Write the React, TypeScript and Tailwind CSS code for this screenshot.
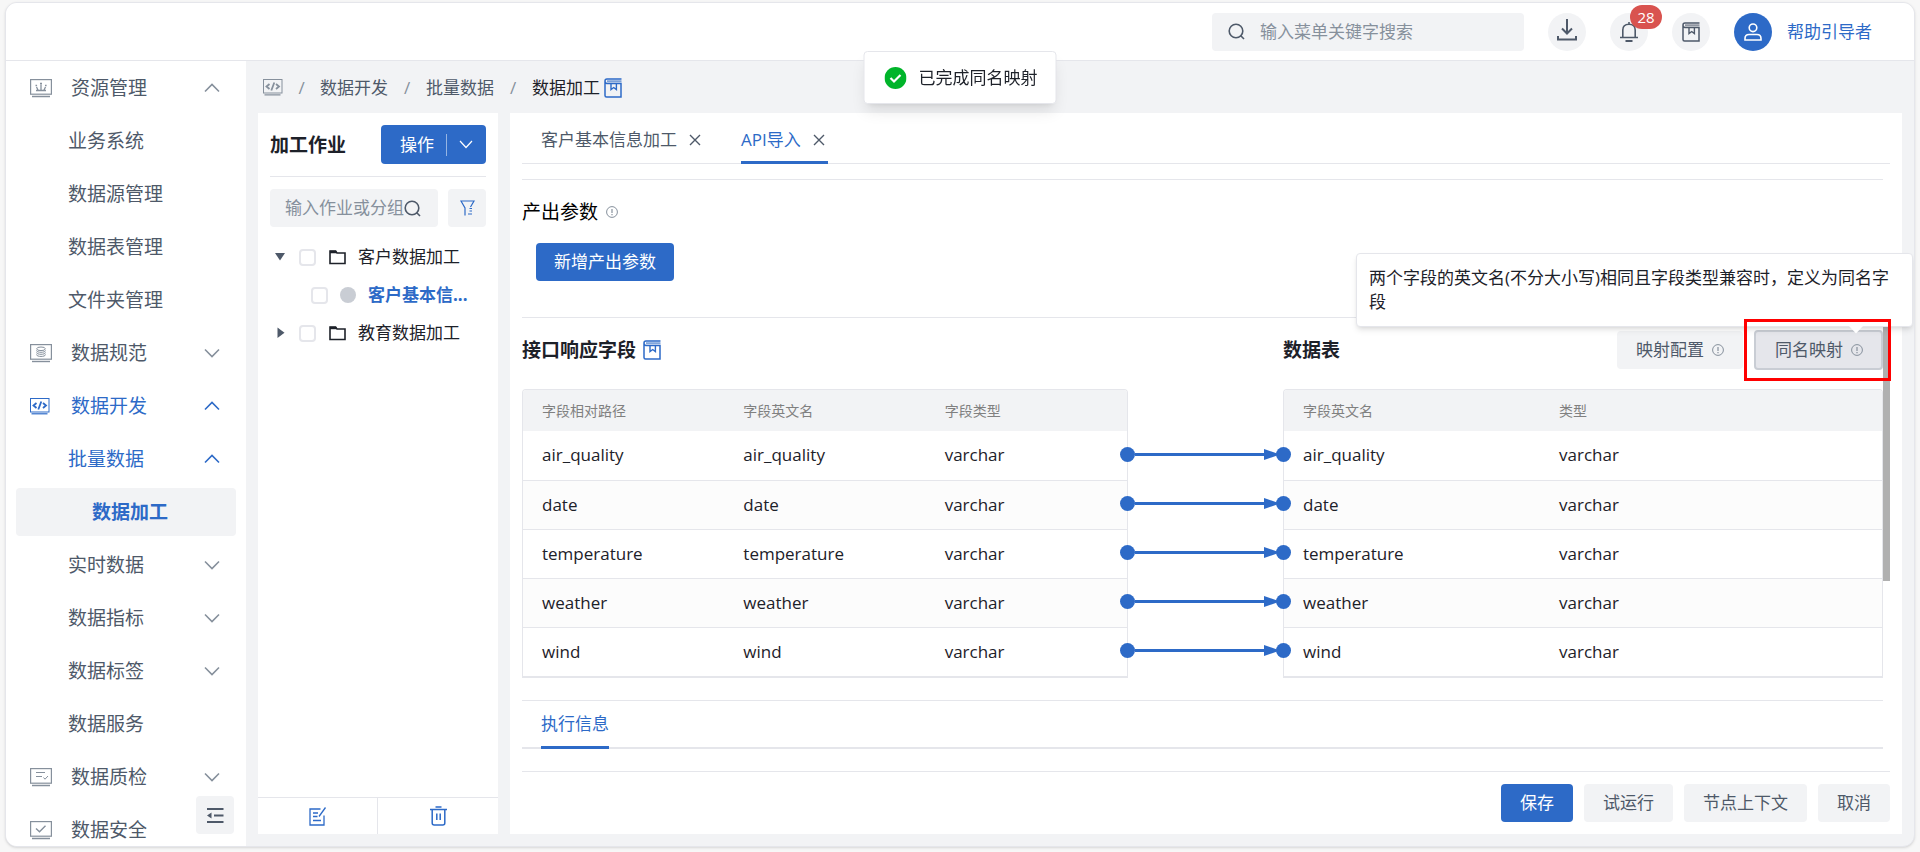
import React from "react";

const MENU = [
  { label: "资源管理", icon: "resource", arrow: "up" },
  { label: "业务系统" },
  { label: "数据源管理" },
  { label: "数据表管理" },
  { label: "文件夹管理" },
  { label: "数据规范", icon: "standard", arrow: "down" },
  { label: "数据开发", icon: "code", arrow: "up", active: true },
  { label: "批量数据", arrow: "up", active: true },
  { label: "数据加工", current: true },
  { label: "实时数据", arrow: "down" },
  { label: "数据指标", arrow: "down" },
  { label: "数据标签", arrow: "down" },
  { label: "数据服务" },
  { label: "数据质检", icon: "quality", arrow: "down" },
  { label: "数据安全", icon: "security" },
];

const FIELDS = ["air_quality", "date", "temperature", "weather", "wind"];

function MonitorIcon({ kind }: { kind?: string }) {
  if (kind === "code") {
    return (
      <svg width="20" height="17" viewBox="0 0 20 17" fill="none" stroke="currentColor">
        <rect x="0.5" y="0.5" width="18.5" height="13.5" />
        <path d="M1.5 15.8h16" strokeWidth="1.2" />
        <path d="M6.500 5L3.500 7.500l3 2.500M13 5l3 2.500-3 2.500M11.300 3.500l-3 8" strokeWidth="1.800" />
      </svg>
    );
  }
  return (
    <svg width="22" height="19" viewBox="0 0 22 19" fill="none" stroke="currentColor">
      <rect x="0.6" y="0.6" width="20.8" height="14.6" strokeWidth="1.2" />
      <path d="M2 17.5h18" strokeWidth="1.4" />
      {kind === "resource" && (
        <path d="M6 11.500h10M8 11L6.500 8M11 11V5.500M14 11l1.500-3M5.500 6.500h1.600M10 4.500h2M15 6.500h1.600" strokeWidth="1.300" />
      )}
      {kind === "standard" && (
        <>
          <ellipse cx="11" cy="4.8" rx="4.3" ry="1.8" />
          <path d="M6.5 6.5c0 2.4 9 2.4 9 0M6.5 8.5c0 2.4 9 2.4 9 0M6.5 10.5c0 2.6 9 2.6 9 0" />
        </>
      )}
      {kind === "quality" && <path d="M6 4.5h9M6 8.5h6M13.5 9.5l1.5 1.7 3-3.2" />}
      {kind === "security" && <path d="M6 7.5l3.5 3.2 6-6" strokeWidth="1.4" />}
    </svg>
  );
}

function Chevron({ up, className }: { up?: boolean; className?: string }) {
  return (
    <svg width="16" height="10" viewBox="0 0 16 10" fill="none" stroke="currentColor" strokeWidth="1.6" className={className}>
      <path d={up ? "M1 8.5l7-7 7 7" : "M1 1.5l7 7 7-7"} />
    </svg>
  );
}

function BookIcon() {
  return (
    <svg width="18" height="20" viewBox="0 0 18 20" fill="none" stroke="currentColor" strokeWidth="1.5">
      <path d="M17.500 1H3Q1 1 1 3v14.500Q1 19 2.500 19H17V5.500H3Q1 5.500 1 3" />
      <path d="M3 3.200h14.500" strokeWidth="2" strokeOpacity="0.6" />
      <path d="M7 6v5.500l2.700-2 2.700 2V6" strokeWidth="1.400" />
    </svg>
  );
}

function InfoIcon() {
  return (
    <svg width="12" height="12" viewBox="0 0 12 12" fill="none" stroke="#86909c" className="shrink-0">
      <circle cx="6" cy="6" r="5.400" />
      <path d="M6 3v4M6 8v1.300" strokeWidth="1.200" />
    </svg>
  );
}

function SearchIcon() {
  return (
    <svg width="17" height="17" viewBox="0 0 17 17" fill="none" stroke="#4e5969" strokeWidth="1.600" className="shrink-0">
      <circle cx="8" cy="8" r="6.800" />
      <path d="M12.500 12.500l3.500 3.500" />
    </svg>
  );
}

function CloseIcon() {
  return (
    <svg width="12" height="12" viewBox="0 0 12 12" fill="none" stroke="#4e5969" strokeWidth="1.400">
      <path d="M1 1l10 10M11 1L1 11" />
    </svg>
  );
}

function FolderIcon() {
  return (
    <svg width="17" height="15" viewBox="0 0 17 15" fill="none" stroke="#1d2129" strokeWidth="1.600">
      <path d="M1 13.500V1h5.500l1.500 2h8v10.500z" />
      <path d="M1 2h6.500" strokeWidth="2.400" />
    </svg>
  );
}

function Header() {
  return (
    <header className="flex h-[58px] items-center justify-end border-b border-[#e5e6eb] bg-white pr-[42px]">
      <label className="flex h-[38px] w-[312px] items-center gap-[15px] rounded bg-[#f2f3f5] px-4">
        <SearchIcon />
        <input
          aria-label="搜索菜单"
          placeholder="输入菜单关键字搜索"
          className="min-w-0 flex-1 bg-transparent outline-none placeholder:text-[#86909c]"
        />
      </label>
      <div className="ml-6 flex items-center gap-6">
        <button aria-label="下载" className="flex size-[38px] items-center justify-center rounded-full bg-[#f2f3f5]">
          <svg width="20" height="22" viewBox="0 0 20 22" fill="none" stroke="#4e5969" strokeWidth="2" className="mb-1">
            <path d="M10 0v14M5 9.500l5 5 5-5M1 17v3.500h18V17" />
          </svg>
        </button>
        <button aria-label="通知" className="relative flex size-[38px] items-center justify-center rounded-full bg-[#f2f3f5]">
          <svg width="18" height="20" viewBox="0 0 18 20" fill="none" stroke="#4e5969" strokeWidth="1.600">
            <path d="M0 15.500h18M2.800 15.500V8q0-5.800 6.200-5.800T15.200 8v7.500M9 0v2" />
            <path d="M5.500 19h7" strokeWidth="1.800" />
          </svg>
          <span className="absolute -top-2 left-5 flex h-6 w-8 items-center justify-center rounded-full bg-[#d9534f] text-[15px] text-white">
            28
          </span>
        </button>
        <button aria-label="文档" className="flex size-[38px] items-center justify-center rounded-full bg-[#f2f3f5] text-[#4e5969]">
          <BookIcon />
        </button>
      </div>
      <button className="ml-6 flex items-center gap-[15px] text-[#2d6ac7]">
        <span className="flex size-[38px] items-center justify-center rounded-full bg-[#2d6ac7]">
          <svg width="18" height="18" viewBox="0 0 18 18" fill="none" stroke="white" strokeWidth="1.600">
            <circle cx="9" cy="4.800" r="3.800" />
            <path d="M1 17v-1.500q0-4 4-4h8q4 0 4 4V17z" />
          </svg>
        </span>
        帮助引导者
      </button>
    </header>
  );
}

function Sidebar() {
  return (
    <nav className="relative flex w-60 shrink-0 flex-col gap-[5px] overflow-hidden bg-white px-[10px] pt-[3px] text-[19px]">
      {MENU.map((item) => {
        const color = item.current || item.active ? "text-[#2d6ac7]" : "text-[#4e5969]";
        return (
          <a
            key={item.label}
            href="#"
            className={`flex h-12 shrink-0 items-center rounded pr-4 ${color} ${
              item.current ? "bg-[#f2f3f5] pl-[76px] font-bold" : item.icon ? "pl-[14px]" : "pl-[52px]"
            }`}
          >
            {item.icon && (
              <span className={`w-[41px] ${item.active ? "" : "text-[#86909c]"}`}>
                <MonitorIcon kind={item.icon} />
              </span>
            )}
            {item.label}
            {item.arrow && (
              <Chevron up={item.arrow === "up"} className={`ml-auto ${item.active ? "" : "text-[#86909c]"}`} />
            )}
          </a>
        );
      })}
      <button
        aria-label="收起菜单"
        className="absolute right-3 bottom-3 flex size-[38px] items-center justify-center rounded bg-[#f2f3f5]"
      >
        <svg width="18" height="15" viewBox="0 0 18 15" fill="none" stroke="#4e5969" strokeWidth="1.800">
          <path d="M1 1h16.500M8 7.500h9.500M1 14h16.500" />
          <path d="M5.500 4.500v6L1 7.500z" fill="#4e5969" stroke="none" />
        </svg>
      </button>
    </nav>
  );
}

function Breadcrumb() {
  return (
    <div className="flex h-[52px] shrink-0 items-center pt-px pl-[17px] text-[#4e5969]">
      <span className="text-[#86909c]">
        <MonitorIcon kind="code" />
      </span>
      <span className="w-[37px] text-center text-[#86909c]">/</span>
      <a href="#">数据开发</a>
      <span className="w-[38px] text-center text-[#86909c]">/</span>
      <a href="#">批量数据</a>
      <span className="w-[38px] text-center text-[#86909c]">/</span>
      <span className="mr-1 text-[#1d2129]">数据加工</span>
      <span className="text-[#2d6ac7]">
        <BookIcon />
      </span>
    </div>
  );
}

function Check({ label }: { label: string }) {
  return (
    <input
      type="checkbox"
      aria-label={label}
      className="size-[17px] shrink-0 appearance-none rounded border-2 border-[#e5e6eb] bg-white"
    />
  );
}

function JobPanel() {
  return (
    <section className="flex w-60 shrink-0 flex-col bg-white">
      <div className="mx-3 flex h-16 items-center justify-between border-b border-[#e5e6eb]">
        <h2 className="text-[19px] font-bold text-[#1d2129]">加工作业</h2>
        <button className="flex h-[39px] w-[105px] items-center rounded bg-[#2d6ac7] pl-[19px] text-white">
          操作
          <span className="mr-3 ml-3 h-[22px] w-px bg-white/50"></span>
          <svg width="14" height="9" viewBox="0 0 14 9" fill="none" stroke="currentColor" strokeWidth="1.200">
            <path d="M1 1l6 6.500L13 1" />
          </svg>
        </button>
      </div>
      <div className="mx-3 mt-3 flex gap-[10px]">
        <label className="flex h-[38px] min-w-0 flex-1 items-center rounded bg-[#f2f3f5] pr-[17px] pl-[15px]">
          <input
            aria-label="搜索作业"
            placeholder="输入作业或分组"
            className="min-w-0 flex-1 bg-transparent outline-none placeholder:text-[#86909c]"
          />
          <SearchIcon />
        </label>
        <button aria-label="筛选" className="flex size-[38px] items-center justify-center rounded bg-[#f2f3f5]">
          <svg width="15" height="16" viewBox="0 0 15 16" fill="none" stroke="#2d6ac7" strokeWidth="1.200">
            <path d="M5 15.500V8L1 1h13l-3.500 6M9.500 8.500H12M9.500 11H12M8 14h4" />
          </svg>
        </button>
      </div>
      <ul className="mt-[11px] px-4 text-[#1d2129]">
        <li className="flex h-[38px] items-center">
          <svg width="12" height="8" viewBox="0 0 12 8" fill="#4e5969">
            <path d="M1 0h10L6 7.500z" />
          </svg>
          <span className="mr-[13px] ml-[13px] flex">
            <Check label="客户数据加工" />
          </span>
          <FolderIcon />
          <a href="#" className="ml-3">客户数据加工</a>
        </li>
        <li className="flex h-[38px] items-center pl-[37px]">
          <Check label="客户基本信息加工" />
          <span className="ml-3 size-4 shrink-0 rounded-full bg-[#c9cdd4]"></span>
          <a href="#" className="ml-3 font-bold whitespace-nowrap text-[#2d6ac7]">客户基本信...</a>
        </li>
        <li className="flex h-[38px] items-center">
          <svg width="12" height="12" viewBox="0 0 12 12" fill="#4e5969">
            <path d="M3.500 0.500v10.500l7-5.200z" />
          </svg>
          <span className="mr-[13px] ml-[13px] flex">
            <Check label="教育数据加工" />
          </span>
          <FolderIcon />
          <a href="#" className="ml-3">教育数据加工</a>
        </li>
      </ul>
      <div className="mt-auto grid h-[37px] grid-cols-2 border-t border-[#e5e6eb]">
        <button aria-label="编辑" className="flex items-center justify-center border-r border-[#e5e6eb]">
          <svg width="18" height="19" viewBox="0 0 18 19" fill="none" stroke="#2d6ac7" strokeWidth="1.300">
            <path d="M11.500 2H1v16h14V8.500M16.500 0.500L10 9.500M4 6h5M4 9.500h4.500M4 13.500h8" />
          </svg>
        </button>
        <button aria-label="删除" className="flex items-center justify-center">
          <svg width="17" height="20" viewBox="0 0 17 20" fill="none" stroke="#2d6ac7" strokeWidth="1.500">
            <path d="M0 3.500h17M5.500 1h6M2.200 3.500V17q0 2 2 2h8.600q2 0 2-2V3.500M6.800 7.500v6.500M10.200 7.500v6.500" />
          </svg>
        </button>
      </div>
    </section>
  );
}

function FieldTable({ columns, rows, widths }: { columns: string[]; rows: string[][]; widths: string[] }) {
  return (
    <div className="overflow-hidden rounded-t border border-b-2 border-[#e5e6eb]">
      <table className="w-full table-fixed text-left text-[#1d2129]">
        <thead className="bg-[#f2f3f5] text-[14px] text-[#808080]">
          <tr className="h-[41px]">
            {columns.map((c, i) => (
              <th key={c} className={`pl-[19px] font-normal ${widths[i]}`}>{c}</th>
            ))}
          </tr>
        </thead>
        <tbody>
          {rows.map((row) => (
            <tr key={row[0]} className="h-[49px] border-b border-[#e5e6eb] last:border-b-0 even:bg-[#fcfcfc]">
              {row.map((cell, i) => (
                <td key={i} className="pl-[19px]">{cell}</td>
              ))}
            </tr>
          ))}
        </tbody>
      </table>
    </div>
  );
}

// connector between the two tables, its dots sit on the table borders
function Links() {
  return (
    <div className="z-10 -mx-2 mt-[41px]">
      {FIELDS.map((f) => (
        <div key={f} className="flex h-[49px] items-center">
          <span className="size-[15px] rounded-full bg-[#2d6ac7]"></span>
          <span className="h-[3px] flex-1 bg-[#2d6ac7]"></span>
          <svg width="16" height="11" viewBox="0 0 16 11" fill="#2d6ac7" className="-mr-1">
            <path d="M0 0l16 5.500-16 5.500z" />
          </svg>
          <span className="size-[15px] rounded-full bg-[#2d6ac7]"></span>
        </div>
      ))}
    </div>
  );
}

function Mapping() {
  return (
    <div className="grid grid-cols-[606fr_155fr_600fr] border-t border-[#e5e6eb] pt-3">
      <h3 className="flex h-10 items-center gap-[7px] text-[19px] font-bold text-[#1d2129]">
        接口响应字段
        <span className="text-[#2d6ac7]">
          <BookIcon />
        </span>
      </h3>
      <div></div>
      <div className="flex h-10 items-center">
        <h3 className="mr-auto text-[19px] font-bold text-[#1d2129]">数据表</h3>
        <button className="mr-[11px] flex h-[38px] items-center gap-2 rounded bg-[#f2f3f5] px-[19px] text-[#4e5969]">
          映射配置
          <InfoIcon />
        </button>
        <div className="relative">
          <button className="flex h-[40px] items-center gap-2 rounded border-2 border-[#c9cdd4] bg-[#e5e6eb] pr-[18px] pl-[19px] text-[#4e5969]">
            同名映射
            <InfoIcon />
          </button>
          <div className="absolute -top-[11px] -right-2 -left-[10px] z-10 h-[62px] border-[3px] border-[#ff0000]"></div>
          <div
            role="tooltip"
            className="absolute -right-[30px] bottom-[43px] w-[557px] rounded border border-[#e5e6eb] bg-white px-3 py-3 leading-6 text-[#1d2129] shadow-md"
          >
            两个字段的英文名(不分大小写)相同且字段类型兼容时，定义为同名字段
            <svg width="14" height="8" viewBox="0 0 14 8" fill="white" className="absolute top-full right-[49px]">
              <path d="M0 0h14L7 7.500z" />
            </svg>
          </div>
        </div>
      </div>
      <div className="mt-[19px]">
        <FieldTable
          columns={["字段相对路径", "字段英文名", "字段类型"]}
          widths={["w-1/3", "w-1/3", "w-1/3"]}
          rows={FIELDS.map((f) => [f, f, "varchar"])}
        />
      </div>
      <div className="mt-[19px] flex flex-col">
        <Links />
      </div>
      <div className="mt-[19px]">
        <FieldTable
          columns={["字段英文名", "类型"]}
          widths={["w-[256px]", "w-auto"]}
          rows={FIELDS.map((f) => [f, "varchar"])}
        />
      </div>
    </div>
  );
}

function Workspace() {
  return (
    <main className="flex min-w-0 flex-1 flex-col bg-white px-3">
      <div className="flex h-[51px] gap-9 border-b border-[#e5e6eb] pl-[19px]">
        <div className="flex items-center gap-3 pt-1 pr-1 text-[#4e5969]">
          <button>客户基本信息加工</button>
          <button aria-label="关闭">
            <CloseIcon />
          </button>
        </div>
        <div className="-mb-px flex items-center gap-3 border-b-[3px] border-[#2d6ac7] pt-[6px] pr-[3px] text-[#2d6ac7]">
          <button>API导入</button>
          <button aria-label="关闭">
            <CloseIcon />
          </button>
        </div>
      </div>

      <div className="relative mt-[15px] flex-1 pr-[7px]">
        <div className="border-t border-[#e5e6eb] pt-[18px]">
          <h3 className="flex items-center gap-2 text-[19px] leading-7 text-black">
            产出参数
            <InfoIcon />
          </h3>
          <button className="mt-[17px] mb-[36px] ml-[14px] h-[38px] rounded bg-[#2d6ac7] px-[18px] text-white">
            新增产出参数
          </button>
        </div>
        <div className="absolute top-[140px] right-0 h-[262px] w-[7px] bg-[#b0b0b0]"></div>
        <Mapping />
        <div className="mt-[22px] border-t border-b-2 border-t-[#e5e6eb] border-b-[#e5e6eb] pl-[19px]">
          <button className="-mb-[2px] block h-12 border-b-[3px] border-[#2d6ac7] text-[#2d6ac7]">执行信息</button>
        </div>
      </div>

      <footer className="flex justify-end gap-[11px] border-t border-[#e5e6eb] py-3 text-[#4e5969]">
        <button className="h-[38px] rounded bg-[#2d6ac7] px-[19px] text-white">保存</button>
        <button className="h-[38px] rounded bg-[#f2f3f5] px-[19px]">试运行</button>
        <button className="h-[38px] rounded bg-[#f2f3f5] px-[19px]">节点上下文</button>
        <button className="h-[38px] rounded bg-[#f2f3f5] px-[19px]">取消</button>
      </footer>
    </main>
  );
}

export default function App() {
  return (
    <div className="h-screen bg-[#f7f7f7] pt-[2px] pr-[5px] pb-[5px] pl-[5px] font-['Open_Sans','Noto_Sans_CJK_SC',sans-serif] text-[17px] leading-6">
      <div className="flex h-full flex-col overflow-hidden rounded-xl border border-[#e5e6eb] bg-[#f2f3f5] shadow-sm">
        <Header />
        <div className="flex min-h-0 flex-1">
          <Sidebar />
          <div className="flex min-w-0 flex-1 flex-col pr-3 pb-3">
            <Breadcrumb />
            <div className="flex min-h-0 flex-1 gap-3 pl-3">
              <JobPanel />
              <Workspace />
            </div>
          </div>
        </div>
      </div>

      <div
        role="status"
        className="fixed top-[51px] left-1/2 z-20 flex h-[53px] -translate-x-1/2 items-center gap-3 rounded border border-[#e5e6eb] bg-white pr-[18px] pl-5 text-[#1d2129] shadow-lg"
      >
        <svg width="22" height="22" viewBox="0 0 22 22" fill="none">
          <circle cx="11" cy="11" r="11" fill="#00b42a" />
          <path d="M6 11l3.500 3.500L16 8" stroke="white" strokeWidth="2.200" />
        </svg>
        已完成同名映射
      </div>
    </div>
  );
}
